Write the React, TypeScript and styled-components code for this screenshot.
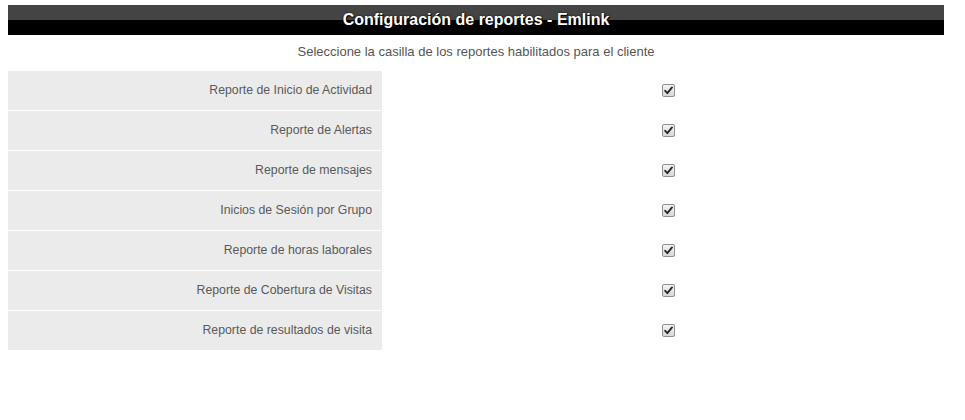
import React from "react";
import styled, { createGlobalStyle } from "styled-components";

const Global = createGlobalStyle`
  html, body { background: #fff; }
  body {
    margin: 5px 8px;
    font-family: "Liberation Sans", Arial, sans-serif;
  }
`;

const Page = styled.div`
  width: 936px;
`;

const Header = styled.div`
  height: 30px;
  display: flex;
  align-items: center;
  justify-content: center;
  background: linear-gradient(to bottom, #444 0, #444 15px, #000 15px, #000 30px);
  color: #fff;
  font-size: 16px;
  font-weight: bold;
  text-shadow: 0 0 2px #000, 1px 1px 1px #000;
`;

const Subtitle = styled.div`
  text-align: center;
  font-size: 13px;
  color: #555;
  height: 36px;
  line-height: 33px;
`;

const Rows = styled.div`
  display: flex;
  flex-direction: column;
  gap: 1px;
`;

const Row = styled.div`
  display: grid;
  grid-template-columns: 374px 1fr;
  height: 39px;
`;

const Label = styled.div`
  background: #ebebeb;
  display: flex;
  align-items: center;
  justify-content: flex-end;
  padding-right: 10px;
  padding-bottom: 1px;
  font-size: 12.3px;
  color: #5a5a5a;
`;

const CheckCell = styled.div`
  display: flex;
  align-items: center;
  justify-content: center;
  padding-left: 11px;
`;

const Box = styled.span`
  width: 11px;
  height: 11px;
  border: 1px solid #8f8f8f;
  border-radius: 2px;
  background: linear-gradient(to bottom, #f4f4f4, #d8d8d8);
  display: flex;
  align-items: center;
  justify-content: center;
`;

const reports = [
  "Reporte de Inicio de Actividad",
  "Reporte de Alertas",
  "Reporte de mensajes",
  "Inicios de Sesión por Grupo",
  "Reporte de horas laborales",
  "Reporte de Cobertura de Visitas",
  "Reporte de resultados de visita",
];

const Check = () => (
  <Box>
    <svg width="9" height="9" viewBox="0 0 9 9">
      <path d="M1.2 4.8 L3.4 7.2 L8 1.4" fill="none" stroke="#2a2a2a" strokeWidth="1.9" strokeLinecap="round" strokeLinejoin="round" />
    </svg>
  </Box>
);

export default function App() {
  return (
    <Page>
      <Global />
      <Header>Configuración de reportes - Emlink</Header>
      <Subtitle>Seleccione la casilla de los reportes habilitados para el cliente</Subtitle>
      <Rows>
        {reports.map((r) => (
          <Row key={r}>
            <Label>{r}</Label>
            <CheckCell>
              <Check />
            </CheckCell>
          </Row>
        ))}
      </Rows>
    </Page>
  );
}
